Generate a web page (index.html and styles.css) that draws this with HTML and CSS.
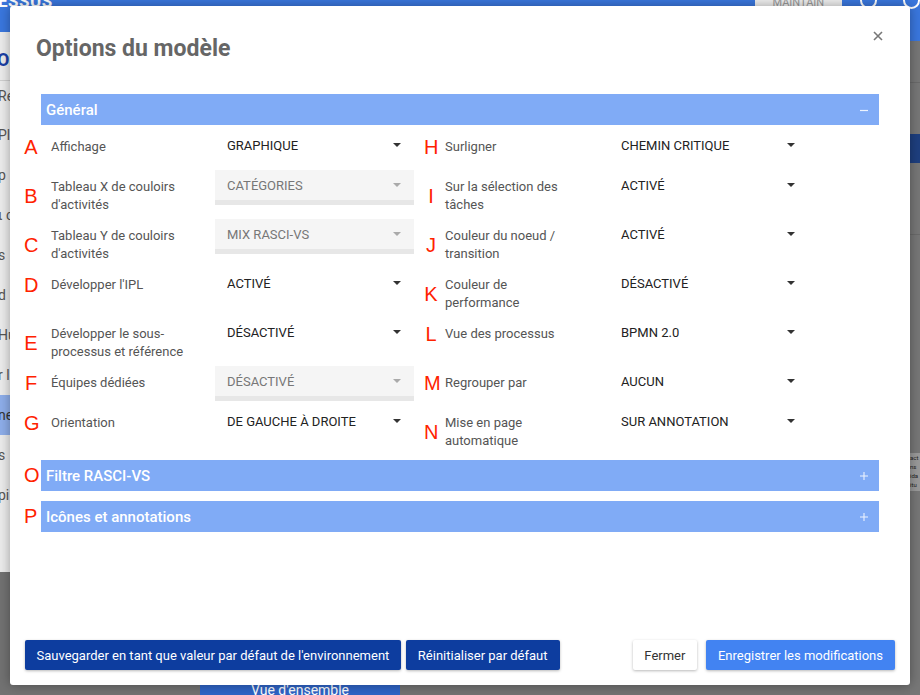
FILE: index.html
```html
<!DOCTYPE html>
<html lang="fr">
<head>
<meta charset="utf-8">
<title>Options du modèle</title>
<link rel="stylesheet" href="styles.css">
</head>
<body>
<div class="app">
  <header class="topbar">
    <span class="brand">ESSUS</span>
    <span class="maintain">MAINTAIN</span>
    <span class="circ"></span>
    <span class="circ"></span>
  </header>
  <div class="main">
    <aside class="sidebar">
      <div class="side-title">O</div>
      <div class="side-item">Re</div>
      <div class="side-item">Pl</div>
      <div class="side-item">p</div>
      <div class="side-item">ι c</div>
      <div class="side-item">s</div>
      <div class="side-item">d</div>
      <div class="side-item">Hu</div>
      <div class="side-item">r l</div>
      <div class="side-item active">ne</div>
      <div class="side-item">s</div>
      <div class="side-item">pi</div>
    </aside>
    <div class="canvas">
      <div class="overview">Vue d'ensemble</div>
    </div>
    <div class="rstrip">
      <div class="r-line"></div>
      <div class="r-block"></div>
      <div class="r-line r-line2"></div>
      <div class="r-note">act<br>ns<br>ida<br>itu</div>
    </div>
  </div>
</div>

<div class="modal">
  <div class="m-head">
    <h1 class="m-title">Options du modèle</h1>
    <svg class="m-close" width="10" height="10" viewBox="0 0 10 10"><path d="M1 1L9 9M9 1L1 9" stroke="#777" stroke-width="1.6" fill="none"/></svg>
  </div>
  <div class="m-body">
    <div class="sec-head">
      <span>Général</span>
      <svg width="8" height="8" viewBox="0 0 8 8"><path d="M0 4.5H8" stroke="#fff" stroke-opacity="0.85" stroke-width="1.2"/></svg>
    </div>
    <div class="grid">
      <div class="opt left"><div class="lab"><span class="ltr">A</span><span class="txt">Affichage</span></div><div class="sel">GRAPHIQUE<i class="caret"></i></div></div>
      <div class="opt right"><div class="lab"><span class="ltr">H</span><span class="txt">Surligner</span></div><div class="sel">CHEMIN CRITIQUE<i class="caret"></i></div></div>

      <div class="opt left"><div class="lab"><span class="ltr">B</span><span class="txt">Tableau X de couloirs d'activités</span></div><div class="sel dis">CATÉGORIES<i class="caret"></i></div></div>
      <div class="opt right"><div class="lab"><span class="ltr">I</span><span class="txt">Sur la sélection des tâches</span></div><div class="sel">ACTIVÉ<i class="caret"></i></div></div>

      <div class="opt left"><div class="lab"><span class="ltr">C</span><span class="txt">Tableau Y de couloirs d'activités</span></div><div class="sel dis">MIX RASCI-VS<i class="caret"></i></div></div>
      <div class="opt right"><div class="lab"><span class="ltr">J</span><span class="txt">Couleur du noeud / transition</span></div><div class="sel">ACTIVÉ<i class="caret"></i></div></div>

      <div class="opt left"><div class="lab"><span class="ltr">D</span><span class="txt">Développer l'IPL</span></div><div class="sel">ACTIVÉ<i class="caret"></i></div></div>
      <div class="opt right"><div class="lab"><span class="ltr">K</span><span class="txt">Couleur de performance</span></div><div class="sel">DÉSACTIVÉ<i class="caret"></i></div></div>

      <div class="opt left"><div class="lab"><span class="ltr">E</span><span class="txt">Développer le sous-processus et référence</span></div><div class="sel">DÉSACTIVÉ<i class="caret"></i></div></div>
      <div class="opt right"><div class="lab"><span class="ltr">L</span><span class="txt">Vue des processus</span></div><div class="sel">BPMN 2.0<i class="caret"></i></div></div>

      <div class="opt left"><div class="lab"><span class="ltr">F</span><span class="txt">Équipes dédiées</span></div><div class="sel dis">DÉSACTIVÉ<i class="caret"></i></div></div>
      <div class="opt right"><div class="lab"><span class="ltr">M</span><span class="txt">Regrouper par</span></div><div class="sel">AUCUN<i class="caret"></i></div></div>

      <div class="opt left"><div class="lab"><span class="ltr">G</span><span class="txt">Orientation</span></div><div class="sel">DE GAUCHE À DROITE<i class="caret"></i></div></div>
      <div class="opt right"><div class="lab"><span class="ltr">N</span><span class="txt">Mise en page automatique</span></div><div class="sel">SUR ANNOTATION<i class="caret"></i></div></div>
    </div>

    <div class="sec-row">
      <span class="sec-ltr">O</span>
      <div class="sec-head">
        <span>Filtre RASCI-VS</span>
        <svg width="8" height="8" viewBox="0 0 8 8"><path d="M0 4H8M4 0V8" stroke="#fff" stroke-opacity="0.85" stroke-width="1.1"/></svg>
      </div>
    </div>
    <div class="sec-row">
      <span class="sec-ltr">P</span>
      <div class="sec-head">
        <span>Icônes et annotations</span>
        <svg width="8" height="8" viewBox="0 0 8 8"><path d="M0 4H8M4 0V8" stroke="#fff" stroke-opacity="0.85" stroke-width="1.1"/></svg>
      </div>
    </div>
  </div>
  <div class="m-foot">
    <div class="btn-group">
      <button class="btn dark save">Sauvegarder en tant que valeur par défaut de l'environnement</button>
      <button class="btn dark reset">Réinitialiser par défaut</button>
    </div>
    <div class="btn-group right-group">
      <button class="btn light">Fermer</button>
      <button class="btn primary">Enregistrer les modifications</button>
    </div>
  </div>
</div>
</body>
</html>
```

FILE: styles.css
```css
* { box-sizing: border-box; }
html, body { margin: 0; padding: 0; }
body {
  width: 920px;
  height: 695px;
  overflow: hidden;
  font-family: Roboto, "Liberation Sans", Arial, sans-serif;
  background: #727272;
  position: relative;
}

/* ---------- background application ---------- */
.app {
  height: 695px;
  display: flex;
  flex-direction: column;
}
.topbar {
  height: 41px;
  flex: none;
  background: #3a77de;
  display: flex;
  align-items: flex-start;
  overflow: hidden;
}
.brand {
  color: #fff;
  font-weight: 700;
  font-size: 17px;
  line-height: 17px;
  margin-top: -7px;
  margin-left: -2px;
  letter-spacing: 0.5px;
}
.maintain {
  margin-left: 702px;
  width: 100px;
  height: 7px;
  background: #efefef;
  color: #999;
  font-size: 11px;
  line-height: 6px;
  text-align: center;
  overflow: hidden;
}
.circ {
  width: 17px;
  height: 17px;
  border: 2px solid #fff;
  border-radius: 50%;
  margin-top: -8px;
  margin-left: 18px;
  flex: none;
}
.circ + .circ { margin-left: 26px; }

.main {
  flex: 1;
  display: flex;
}
.sidebar {
  width: 10px;
  height: 540px;
  margin-top: -9px;
  background: #ececec;
  overflow: hidden;
  display: flex;
  flex-direction: column;
  white-space: nowrap;
  position: relative;
}
.side-title {
  height: 49px;
  border-bottom: 1px solid #cfcfcf;
  color: #1b3fa6;
  font-weight: 700;
  font-size: 18px;
  line-height: 56px;
  text-indent: -3px;
}
.side-item {
  height: 40px;
  font-size: 14px;
  line-height: 40px;
  color: #555;
  text-indent: -2px;
}
.side-item:nth-child(2) { height: 34px; line-height: 30px; }
.side-item.active { background: #8eaeea; color: #333; }
.canvas {
  flex: 1;
  display: flex;
  flex-direction: column;
  justify-content: flex-end;
}
.overview {
  width: 200px;
  height: 20px;
  margin-left: 190px;
  background: #2f64c6;
  color: #fff;
  font-size: 14px;
  line-height: 20px;
  text-align: center;
  margin-bottom: -5px;
}
.rstrip {
  width: 10px;
  display: flex;
  flex-direction: column;
  background: #777;
}
.r-line { height: 1px; background: #6a6a6a; margin-top: 41px; }
.r-block { height: 29px; background: #1e3f7f; margin-top: 51px; }
.r-line2 { margin-top: 71px; }
.r-note {
  margin-top: 218px;
  height: 38px;
  background: #9a9a9a;
  font-size: 6px;
  line-height: 9px;
  color: #222;
  overflow: hidden;
}

/* ---------- modal ---------- */
.modal {
  position: absolute;
  left: 10px;
  top: 6px;
  width: 900px;
  height: 679px;
  background: #fff;
  border-radius: 3px;
  box-shadow: 0 0 12px rgba(0,0,0,0.35);
  display: flex;
  flex-direction: column;
}
.m-head {
  padding: 30px 27px 0 26px;
  display: flex;
  justify-content: space-between;
  align-items: flex-start;
}
.m-title {
  margin: 0;
  font-size: 23px;
  line-height: 26px;
  font-weight: 700;
  color: #666;
}
.m-close { margin-top: -5px; }

.m-body {
  padding: 0 31px;
  margin-top: 32px;
}
.sec-head {
  height: 31px;
  background: #80abf6;
  color: #fff;
  font-size: 15px;
  font-weight: 500;
  display: flex;
  align-items: center;
  justify-content: space-between;
  padding: 0 11px 0 5px;
  flex: 1;
}
.sec-row {
  display: flex;
  align-items: center;
  margin-left: -17px;
  margin-bottom: 10px;
}
.sec-ltr {
  width: 17px;
  font-family: "Liberation Sans", Arial, sans-serif;
  font-size: 20px;
  color: #ff2200;
}

.grid {
  display: grid;
  grid-template-columns: 390px 384px;
  column-gap: 10px;
  row-gap: 5px;
  margin: 5px 0 10px -17px;
}
.opt {
  display: flex;
  align-items: flex-start;
}
.lab {
  display: flex;
  align-items: center;
  padding-top: 8px;
}
.ltr {
  flex: none;
  width: 14px;
  text-align: center;
  font-family: "Liberation Sans", Arial, sans-serif;
  font-size: 20px;
  line-height: 18px;
  color: #ff2200;
}
.left .ltr { margin-right: 13px; }
.right .ltr { margin-right: 7px; }
.txt {
  width: 164px;
  padding-right: 28px;
  font-size: 13px;
  line-height: 18px;
  color: #555;
}
.sel {
  width: 199px;
  height: 35px;
  flex: none;
  padding: 0 13px 0 12px;
  border-bottom: 5px solid transparent;
  display: flex;
  align-items: center;
  justify-content: space-between;
  font-size: 13px;
  color: #222;
}
.sel.dis {
  background: #f5f5f5;
  border-bottom-color: #e7e7e7;
  color: #777;
}
.caret {
  width: 0;
  height: 0;
  border-left: 4px solid transparent;
  border-right: 4px solid transparent;
  border-top: 4px solid #333;
}
.sel.dis .caret { border-top-color: #aaa; }

/* ---------- footer ---------- */
.m-foot {
  margin-top: auto;
  padding: 0 15px 15px;
  display: flex;
  justify-content: space-between;
}
.btn-group { display: flex; gap: 5px; }
.right-group { gap: 9px; }
.btn {
  height: 30px;
  border: none;
  border-radius: 2px;
  padding: 0 12px;
  font-family: Roboto, "Liberation Sans", Arial, sans-serif;
  font-size: 13px;
  box-shadow: 0 1px 3px rgba(0,0,0,0.28);
}
.btn.dark { background: #0d3d9f; color: #fff; }
.btn.save { padding: 0 11.5px; }
.btn.reset { padding: 0 12px; }
.btn.light { background: #fff; color: #333; padding: 0 11.5px; }
.btn.primary { background: #4283f2; color: #fff; padding: 0 12px; }
```
